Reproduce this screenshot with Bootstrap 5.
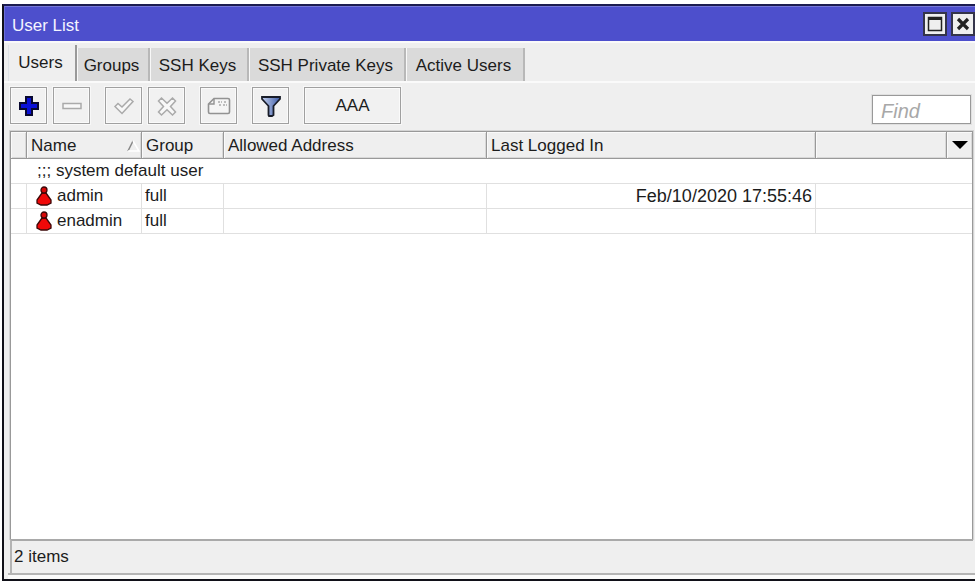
<!DOCTYPE html>
<html lang="en">
<head>
<meta charset="utf-8">
<meta name="viewport" content="width=device-width, initial-scale=1">
<title>User List</title>
<link href="https://cdn.jsdelivr.net/npm/bootstrap@5.3.0/dist/css/bootstrap.min.css" rel="stylesheet">
<style>
body { font-family: "Liberation Sans", Arial, sans-serif; font-size: 17px; line-height: 20px; color: #1c1c1c; background: #fff; }
.desk { padding: 4px 4px 2px 2px; }
.win { border: 2px solid #101018; border-right: 0; border-top-color: #1c1c50; background: #efefef; }
.title-bar { background: #4d4fcc; border-top: 1px solid #7577d8; border-left: 1px solid #6c6ed6; color: #f4f4ff; height: 35px; padding-left: 7px; gap: 4px; }
.title-bar h1 { font-size: 17px; line-height: 20px; padding-top: 4px; }
.win-btn { width: 24px; height: 24px; border: 2px solid #34344a; background: #efefef; }
.tab-strip { border: 0; border-top: 2px solid #fafafa; border-bottom: 2px solid #fafafa; padding-left: 4px; height: 42px; }
.tab-strip .nav-link { border: 0; border-right: 2px solid #b8b8b8; border-left: 1px solid #f8f8f8; border-radius: 0; margin: 0; background: #dadada; color: #1c1c1c; height: 33px; padding: 8px 8px 0 5px; line-height: 20px; text-align: center; white-space: nowrap; }
.tab-strip .nav-link.active { background: #efefef; color: #1c1c1c; height: 36px; border-right-color: #999; padding-top: 8px; }
.tab-users { width: 69px; }
.tab-groups { width: 73px; }
.tab-keys { width: 99px; }
.tab-private { width: 157px; }
.tab-active { width: 119px; }
.tool-bar { padding: 4px 4px 7px 6px; }
.tool, .tool:hover { width: 37px; height: 37px; border: 1px solid #a0a0a0; outline: 1px solid #f8f8f8; border-radius: 0; background: #f1f1f1; box-shadow: inset 0 0 0 1px #fafafa; padding: 0; color: #1c1c1c; font-size: 17px; line-height: 20px; }
.tool-wide, .tool-wide:hover { width: 97px; }
.pair { gap: 6px; }
.tool-groups { gap: 15px; }
.find { width: 99px; height: 29px; border: 1px solid #999; outline: 1px solid #e0e0e0; border-radius: 0; padding: 3px 8px 0; font-size: 20px; font-style: italic; }
.find::placeholder { color: #a8a8a8; }
.list-pane { margin: 0 2px 0 6px; border: 1px solid #999; border-bottom: 0; box-shadow: 0 0 0 1px #d4d4d4; background: #fff; }
.user-table { table-layout: fixed; border-collapse: separate; border-spacing: 0; width: 100%; }
.user-table th { height: 27px; background: #efefef; font-weight: 400; border-right: 1px solid #999; border-bottom: 1px solid #999; box-shadow: inset 1px 1px 0 #fafafa, inset -1px -1px 0 #d8d8d8; padding: 2px 0 0 4px; white-space: nowrap; }
.user-table th:last-child { border-right: 0; padding: 0; }
.user-table td { height: 25px; border-right: 1px solid #e0e0e0; border-bottom: 1px solid #e0e0e0; padding: 0 0 0 3px; white-space: nowrap; }
.user-table td:last-child { border-right: 0; }
.user-table td.note { padding-left: 26px; }
.user-table td.who { padding-left: 8px; }
.user-table td.stamp { font-size: 18px; padding-right: 3px; }
.c-flag { width: 16px; } .c-name { width: 115px; } .c-group { width: 82px; }
.c-address { width: 263px; } .c-login { width: 329px; } .c-menu { width: 25px; }
.drop { border: 0; background: none; width: 25px; height: 24px; padding: 0; }
.status { margin: 0 2px 0 6px; height: 34px; border-top: 2px solid #a9a9a9; border-left: 2px solid #b4b4b4; padding: 6px 0 0 2px; }
.foot-edge { height: 6px; margin-left: 4px; border-top: 2px solid #b4b4b4; background: #fafafa; }
</style>
<script src="https://cdn.jsdelivr.net/npm/bootstrap@5.3.0/dist/js/bootstrap.bundle.min.js"></script>
</head>
<body>
<div class="desk vh-100 d-flex">
<main class="win flex-grow-1 d-flex flex-column">
  <header class="title-bar d-flex align-items-center">
    <h1 class="m-0 me-auto fw-normal">User List</h1>
    <button type="button" class="win-btn p-0 d-flex align-items-center justify-content-center" aria-label="Maximize"><svg width="16" height="16" viewBox="0 0 16 16"><path d="M1.500 1.500H14.500V14.500H1.500Z" fill="none" stroke="#222" stroke-width="1.500"/><path d="M1 2.500H15" stroke="#222" stroke-width="3"/></svg></button>
    <button type="button" class="win-btn p-0 d-flex align-items-center justify-content-center" aria-label="Close"><svg width="16" height="16" viewBox="0 0 16 16"><path d="M3 3L13 13M13 3L3 13" stroke="#222" stroke-width="3.200"/></svg></button>
  </header>
  <nav class="tab-strip nav nav-tabs flex-nowrap align-items-end" aria-label="Sections">
    <a class="nav-link active tab-users" href="#users" aria-current="page">Users</a>
    <a class="nav-link tab-groups" href="#groups">Groups</a>
    <a class="nav-link tab-keys" href="#ssh-keys">SSH Keys</a>
    <a class="nav-link tab-private" href="#private-keys">SSH Private Keys</a>
    <a class="nav-link tab-active" href="#active-users">Active Users</a>
  </nav>
  <div class="tool-bar d-flex align-items-end justify-content-between">
    <div class="tool-groups d-flex">
      <div class="pair d-flex">
        <button type="button" class="tool btn" aria-label="Add"><svg class="d-block mx-auto" width="22" height="22" viewBox="0 0 22 22"><path d="M8 2H14V8H20V14H14V20H8V14H2V8H8Z" fill="#0a10d8" stroke="#080830" stroke-width="2"/></svg></button>
        <button type="button" class="tool btn" aria-label="Remove"><svg class="d-block mx-auto" width="22" height="22" viewBox="0 0 22 22"><path d="M2 8.500H20V13.500H2Z" fill="#f8f8f8" stroke="#aaa" stroke-width="1.500"/></svg></button>
      </div>
      <div class="pair d-flex">
        <button type="button" class="tool btn" aria-label="Enable"><svg class="d-block mx-auto" width="22" height="22" viewBox="0 0 22 22"><path d="M2 11.500L5 8.500L9 12L17 4L20 6.500L9 18.500Z" fill="#f8f8f8" stroke="#aaa" stroke-width="1.500"/></svg></button>
        <button type="button" class="tool btn" aria-label="Disable"><svg class="d-block mx-auto" width="22" height="22" viewBox="0 0 22 22"><path d="M5.500 3L11 8.200L16.500 3L19.500 6L14.500 11.500L19.500 17L16.500 20L11 14.800L5.500 20L2.500 17L7.500 11.500L2.500 6Z" fill="#f8f8f8" stroke="#aaa" stroke-width="1.500"/></svg></button>
      </div>
      <button type="button" class="tool btn" aria-label="Comment"><svg class="d-block mx-auto" width="24" height="22" viewBox="0 0 24 22"><path d="M7 3.500H21Q22.500 3.500 22.500 5V17Q22.500 18.500 21 18.500H3Q1.500 18.500 1.500 17V9Z" fill="#f5f5f5" stroke="#929292" stroke-width="1.600"/><path d="M7 4V9H2" fill="none" stroke="#929292" stroke-width="1.400"/><path d="M11 7H15M17 7H20M12 10H14M16 10H20" stroke="#aaa" stroke-width="1.300" stroke-dasharray="2 1"/></svg></button>
      <button type="button" class="tool btn" aria-label="Filter"><svg class="d-block mx-auto" width="22" height="24" viewBox="0 0 22 24"><defs><linearGradient id="steel"><stop offset="0" stop-color="#c3d0ee"/><stop offset="1" stop-color="#3f5da8"/></linearGradient></defs><path d="M2 3H20V5L13.500 12V21L12 22H9L8.500 21V12L2 5Z" fill="url(#steel)" stroke="#181c28" stroke-width="1.800"/></svg></button>
      <button type="button" class="tool tool-wide btn">AAA</button>
    </div>
    <input type="text" class="find form-control" placeholder="Find" aria-label="Find">
  </div>
  <section class="list-pane flex-grow-1">
    <table class="user-table">
      <colgroup><col class="c-flag"><col class="c-name"><col class="c-group"><col class="c-address"><col class="c-login"><col><col class="c-menu"></colgroup>
      <thead>
        <tr>
          <th></th>
          <th scope="col"><div class="d-flex align-items-center justify-content-between">Name <svg width="14" height="12" viewBox="0 0 14 12"><path d="M1 11L6 1" stroke="#888" stroke-width="1.500"/><path d="M6 1L12 11H1" fill="none" stroke="#fff" stroke-width="1.500"/></svg></div></th>
          <th scope="col">Group</th>
          <th scope="col">Allowed Address</th>
          <th scope="col">Last Logged In</th>
          <th></th>
          <th><button type="button" class="drop d-block" aria-label="Choose columns"><svg class="d-block mx-auto" width="16" height="10" viewBox="0 0 16 10"><path d="M0 1H16L8 9Z"/></svg></button></th>
        </tr>
      </thead>
      <tbody>
        <tr><td class="note" colspan="7">;;; system default user</td></tr>
        <tr>
          <td></td>
          <td class="who"><div class="d-flex align-items-center"><svg width="18" height="20" viewBox="0 0 18 20" class="me-1"><path d="M7 7L2 14V17L6 19H12L16 17V14L11 7Z" fill="#f00808" stroke="#3c0808" stroke-width="1.300"/><circle cx="9" cy="4" r="3" fill="#d80808" stroke="#3c0808" stroke-width="1.300"/></svg>admin</div></td>
          <td>full</td><td></td><td class="stamp text-end">Feb/10/2020 17:55:46</td><td colspan="2"></td>
        </tr>
        <tr>
          <td></td>
          <td class="who"><div class="d-flex align-items-center"><svg width="18" height="20" viewBox="0 0 18 20" class="me-1"><path d="M7 7L2 14V17L6 19H12L16 17V14L11 7Z" fill="#f00808" stroke="#3c0808" stroke-width="1.300"/><circle cx="9" cy="4" r="3" fill="#d80808" stroke="#3c0808" stroke-width="1.300"/></svg>enadmin</div></td>
          <td>full</td><td></td><td></td><td colspan="2"></td>
        </tr>
      </tbody>
    </table>
  </section>
  <footer class="status">2 items</footer>
  <div class="foot-edge"></div>
</main>
</div>
</body>
</html>
